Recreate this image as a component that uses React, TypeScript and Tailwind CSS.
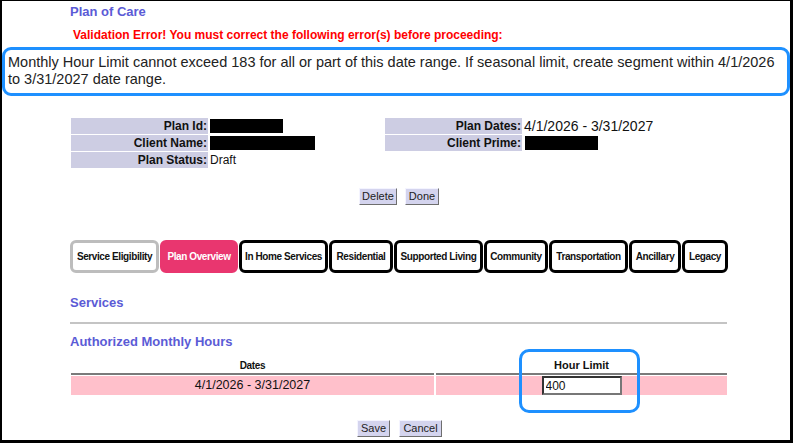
import React from 'react';

const heading = 'font-bold text-[13px] leading-4 text-[#5b5bd6]';

function InfoRow({ label, children }: { label: string; children?: React.ReactNode }) {
  return (
    <div className="flex h-[16px] items-center">
      <div className="w-[137px] h-full bg-[#cdcde3] text-right font-bold text-[12px] leading-[16px] text-[#111] pr-[1px]">
        {label}
      </div>
      <div className="pl-[2px] flex items-center h-full">{children}</div>
    </div>
  );
}

function Redacted({ w }: { w: string }) {
  return <div className={`h-[14px] bg-black ${w}`} />;
}

function Btn({ label, w }: { label: string; w: string }) {
  return (
    <button
      className={`${w} h-[17px] bg-[#d4d4ee] border border-t-[#f4f4ff] border-l-[#f4f4ff] border-r-[#6e6e6e] border-b-[#6e6e6e] text-[11px] leading-none text-[#222] flex items-center justify-center`}
    >
      {label}
    </button>
  );
}

const tabs = [
  { label: 'Service Eligibility', w: 'w-[89px]', kind: 'muted' },
  { label: 'Plan Overview', w: 'w-[78px]', kind: 'active' },
  { label: 'In Home Services', w: 'w-[89px]', kind: 'normal' },
  { label: 'Residential', w: 'w-[64px]', kind: 'normal' },
  { label: 'Supported Living', w: 'w-[89px]', kind: 'normal' },
  { label: 'Community', w: 'w-[64px]', kind: 'normal' },
  { label: 'Transportation', w: 'w-[79px]', kind: 'normal' },
  { label: 'Ancillary', w: 'w-[52px]', kind: 'normal' },
  { label: 'Legacy', w: 'w-[46px]', kind: 'normal' },
];

export default function App() {
  return (
    <div className="relative w-[793px] h-[443px] overflow-hidden bg-white border-black border-l-2 border-t border-r-[3px] border-b-[3px] font-['Liberation_Sans',Arial,sans-serif] text-[#111]">
      <div className={`pl-[68px] pt-[3px] ${heading}`}>Plan of Care</div>

      <div className="pl-[71px] mt-[8px] font-bold text-[12px] leading-[14px] text-[#ff0000]">
        Validation Error! You must correct the following error(s) before proceeding:
      </div>

      {/* error message box */}
      <div className="mt-[5px] w-[788px] border-[3px] border-[#1e90ff] rounded-[9px] pl-[3px] pt-[4px] pb-[5px] text-[14.5px] leading-[17px] text-[#222] whitespace-nowrap">
        Monthly Hour Limit cannot exceed 183 for all or part of this date range. If seasonal limit, create segment within 4/1/2026
        <br />
        to 3/31/2027 date range.
      </div>

      {/* plan info */}
      <div className="mt-[22px] pl-[69px] flex">
        <div className="w-[314px] flex flex-col gap-[1px]">
          <InfoRow label="Plan Id:">
            <Redacted w="w-[73px]" />
          </InfoRow>
          <InfoRow label="Client Name:">
            <Redacted w="w-[105px]" />
          </InfoRow>
          <InfoRow label="Plan Status:">
            <span className="text-[12px] leading-none">Draft</span>
          </InfoRow>
        </div>
        <div className="flex flex-col gap-[1px]">
          <InfoRow label="Plan Dates:">
            <span className="text-[14px] leading-none">4/1/2026 - 3/31/2027</span>
          </InfoRow>
          <InfoRow label="Client Prime:">
            <div className="pl-[1px]">
              <Redacted w="w-[73px]" />
            </div>
          </InfoRow>
        </div>
      </div>

      <div className="mt-[20px] pl-[357px] flex gap-[8px]">
        <Btn label="Delete" w="w-[38px]" />
        <Btn label="Done" w="w-[34px]" />
      </div>

      {/* tabs */}
      <div className="mt-[35px] pl-[68px] flex gap-[1px]">
        {tabs.map((t) => (
          <div
            key={t.label}
            className={`${t.w} h-[33px] rounded-[6px] border-[3px] flex items-center justify-center font-bold text-[10px] tracking-[-0.4px] whitespace-nowrap ${
              t.kind === 'active'
                ? 'bg-[#e9366f] border-[#e9366f] text-white'
                : t.kind === 'muted'
                ? 'border-[#bdbdbd] text-[#111] bg-white'
                : 'border-black text-[#111] bg-white'
            }`}
          >
            {t.label}
          </div>
        ))}
      </div>

      <div className={`mt-[22px] pl-[68px] ${heading}`}>Services</div>
      <div className="mt-[11px] ml-[68px] w-[657px] h-[2px] bg-[#c4c4c4]" />
      <div className={`mt-[10px] pl-[68px] ${heading}`}>Authorized Monthly Hours</div>

      {/* hours table */}
      <div className="mt-[6px] ml-[69px] grid grid-cols-[363px_291px] gap-x-[2px]">
        <div className="h-[19px] flex items-end justify-center pb-[1px] border-b-2 border-[#7a7a7a] font-bold text-[10px] tracking-[-0.3px] leading-[13px]">
          Dates
        </div>
        <div className="h-[19px] flex items-end justify-center pb-[1px] border-b-2 border-[#7a7a7a] font-bold text-[11px] leading-[13px]">
          Hour Limit
        </div>
        <div className="mt-px h-[19px] bg-[#ffc0cb] flex items-center justify-center text-[12.5px]">
          4/1/2026 - 3/31/2027
        </div>
        <div className="mt-px h-[19px] bg-[#ffc0cb] flex items-center justify-center">
          <input
            readOnly
            value="400"
            className="w-[80px] h-[19px] bg-white border-2 border-t-[#333] border-l-[#333] border-r-[#777] border-b-[#777] px-[2px] text-[12px] text-[#111] outline-none"
          />
        </div>
      </div>

      <div className="mt-[25px] pl-[355px] flex gap-[9px]">
        <Btn label="Save" w="w-[33px]" />
        <Btn label="Cancel" w="w-[43px]" />
      </div>

      {/* highlight around hour limit */}
      <div className="absolute left-[517px] top-[348px] w-[121px] h-[64px] border-[3px] border-[#1e90ff] rounded-[10px] pointer-events-none" />
    </div>
  );
}
